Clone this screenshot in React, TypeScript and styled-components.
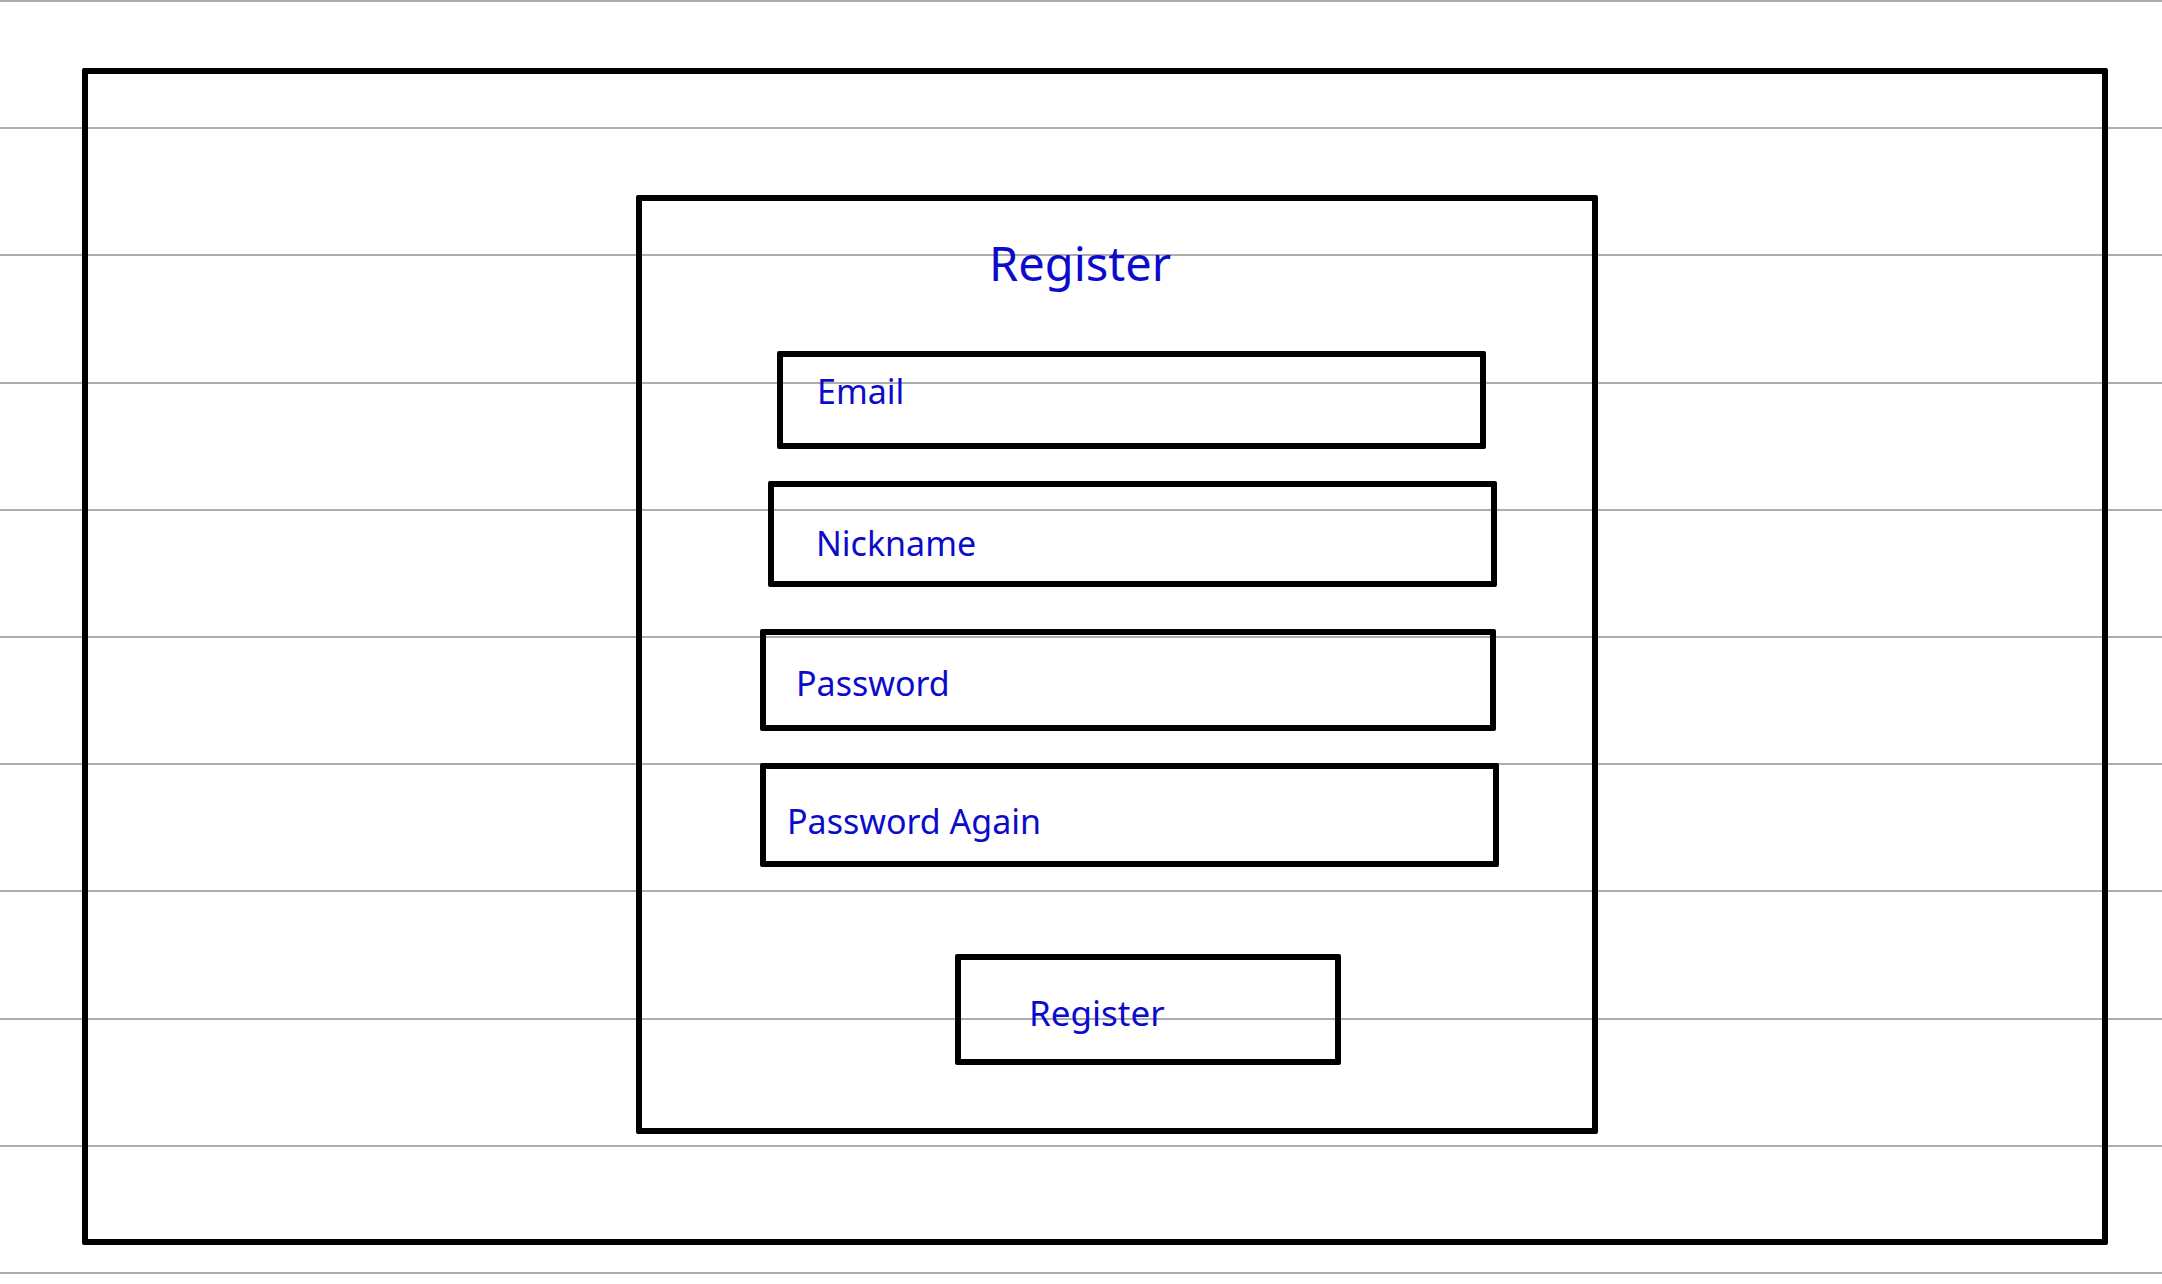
import React from "react";
import styled, { createGlobalStyle } from "styled-components";

const GlobalStyle = createGlobalStyle`
  html, body {
    margin: 0;
    padding: 0;
  }
  body {
    background-color: #ffffff;
    background-image: repeating-linear-gradient(
      to bottom,
      #adadad 0px,
      #adadad 2px,
      transparent 2px,
      transparent 127.2px
    );
    min-height: 1284px;
    font-family: "Noto Sans", "DejaVu Sans", sans-serif;
  }
  * { box-sizing: border-box; }
`;

const Page = styled.div`
  width: 2162px;
  height: 1284px;
  padding: 68px 0 0 82px;
`;

const Frame = styled.div`
  width: 2026px;
  height: 1177px;
  border: 6px solid #000;
  border-radius: 2px;
  padding: 121px 0 0 548px;
`;

const Card = styled.div`
  width: 962px;
  height: 939px;
  border: 6px solid #000;
  border-radius: 2px;
  display: flex;
  flex-direction: column;
  align-items: flex-start;
`;

const Title = styled.h1`
  margin: 39px 0 0 347px;
  font-family: "Noto Sans", sans-serif;
  font-weight: 400;
  font-size: 47px;
  line-height: 1;
  color: #0b0bcc;
`;

type BoxProps = {
  $mt: number;
  $ml: number;
  $w: number;
  $h: number;
  $pt: number;
  $pl: number;
};

const Field = styled.div<BoxProps>`
  display: flex;
  align-items: flex-start;
  justify-content: flex-start;
  margin-top: ${(p) => p.$mt}px;
  margin-left: ${(p) => p.$ml}px;
  width: ${(p) => p.$w}px;
  height: ${(p) => p.$h}px;
  padding: ${(p) => p.$pt}px 0 0 ${(p) => p.$pl}px;
  border: 6px solid #000;
  border-radius: 2px;
  background: transparent;
`;

const Label = styled.span<{ $size?: number }>`
  display: block;
  font-family: "Noto Sans", sans-serif;
  font-size: ${(p) => p.$size ?? 34}px;
  line-height: 1;
  color: #0b0bcc;
  white-space: nowrap;
`;

const Button = styled(Field).attrs({ as: "button", type: "button" })`
  font: inherit;
  cursor: pointer;
  text-align: left;
`;

const fields = [
  { label: "Email", mt: 64, ml: 135, w: 709, h: 98, pt: 17, pl: 34 },
  { label: "Nickname", mt: 32, ml: 126, w: 729, h: 106, pt: 39, pl: 42 },
  { label: "Password", mt: 42, ml: 118, w: 736, h: 102, pt: 31, pl: 30 },
  { label: "Password Again", mt: 32, ml: 118, w: 739, h: 104, pt: 35, pl: 21 },
];

export default function App() {
  return (
    <>
      <GlobalStyle />
      <Page>
        <Frame>
          <Card>
            <Title>Register</Title>
            {fields.map((f) => (
              <Field
                key={f.label}
                $mt={f.mt}
                $ml={f.ml}
                $w={f.w}
                $h={f.h}
                $pt={f.pt}
                $pl={f.pl}
              >
                <Label>{f.label}</Label>
              </Field>
            ))}
            <Button $mt={87} $ml={313} $w={386} $h={111} $pt={35} $pl={68}>
              <Label $size={35}>Register</Label>
            </Button>
          </Card>
        </Frame>
      </Page>
    </>
  );
}
